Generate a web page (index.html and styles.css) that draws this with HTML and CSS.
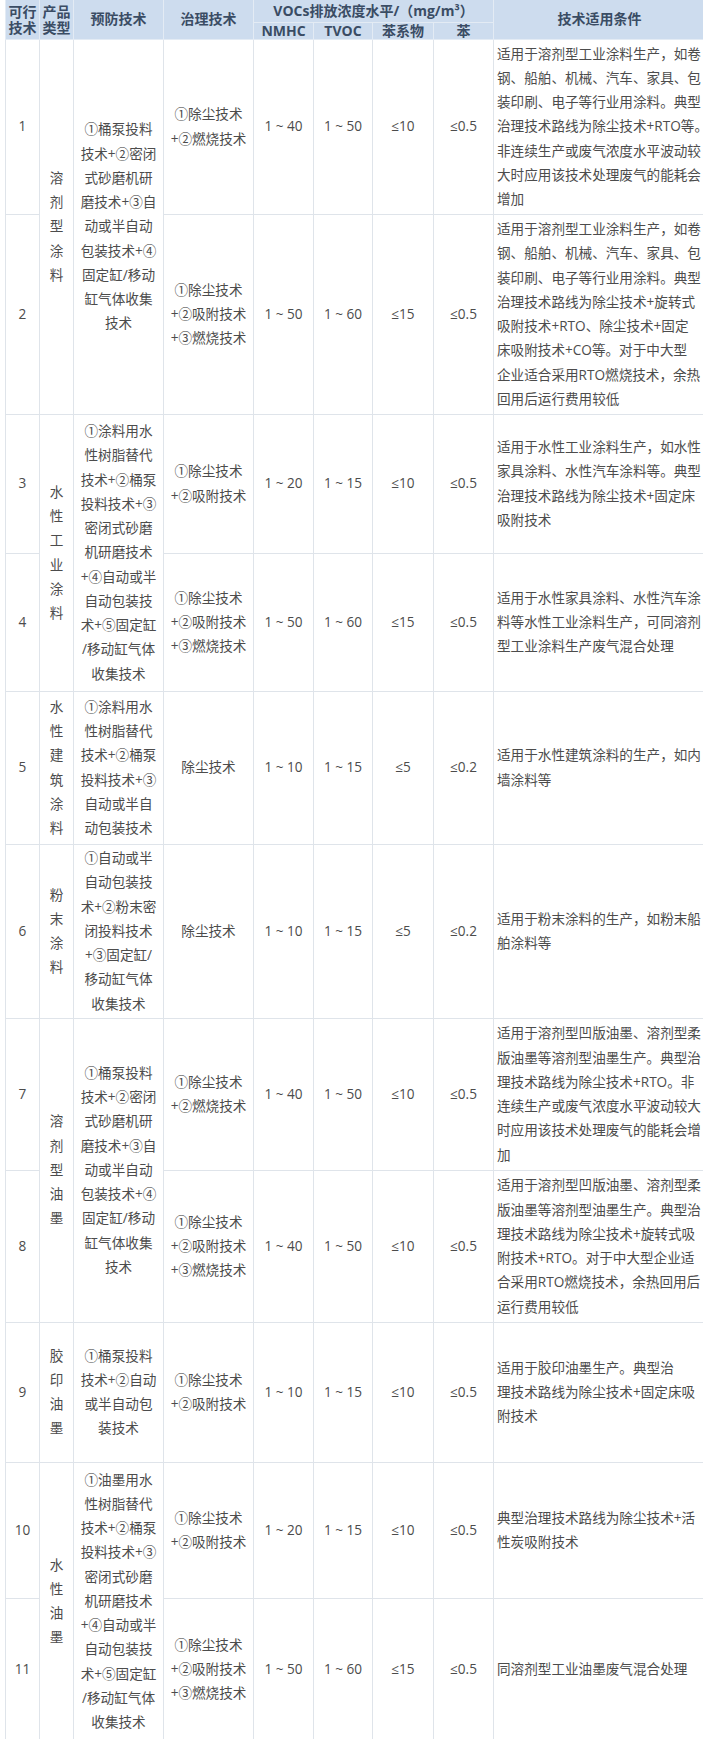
FILE: index.html
```html
<!DOCTYPE html>
<html lang="zh-CN">
<head>
<meta charset="utf-8">
<title>VOCs 可行技术</title>
<link rel="stylesheet" href="styles.css">
</head>
<body>
<table class="tech">
  <colgroup>
    <col class="c-no"><col class="c-type"><col class="c-prev"><col class="c-ctrl">
    <col class="c-v1"><col class="c-v2"><col class="c-v3"><col class="c-v4"><col class="c-cond">
  </colgroup>
  <thead>
    <tr class="h1">
      <th rowspan="2" class="th-tight">可行<br>技术</th>
      <th rowspan="2" class="th-tight">产品<br>类型</th>
      <th rowspan="2">预防技术</th>
      <th rowspan="2">治理技术</th>
      <th colspan="4">VOCs排放浓度水平/（mg/m³）</th>
      <th rowspan="2">技术适用条件</th>
    </tr>
    <tr class="h2"><th>NMHC</th><th>TVOC</th><th>苯系物</th><th>苯</th></tr>
  </thead>
  <tbody>
    <tr class="r1">
      <td>1</td>
      <td rowspan="2"><span class="vt">溶剂型涂料</span></td>
      <td rowspan="2">①桶泵投料<br>技术+②密闭<br>式砂磨机研<br>磨技术+③自<br>动或半自动<br>包装技术+④<br>固定缸/移动<br>缸气体收集<br>技术</td>
      <td>①除尘技术<br>+②燃烧技术</td>
      <td>1 ~ 40</td><td>1 ~ 50</td><td>≤10</td><td>≤0.5</td>
      <td class="cond">适用于溶剂型工业涂料生产，如卷<br>钢、船舶、机械、汽车、家具、包<br>装印刷、电子等行业用涂料。典型<br>治理技术路线为除尘技术+RTO等。<br>非连续生产或废气浓度水平波动较<br>大时应用该技术处理废气的能耗会<br>增加</td>
    </tr>
    <tr class="r2">
      <td>2</td>
      <td>①除尘技术<br>+②吸附技术<br>+③燃烧技术</td>
      <td>1 ~ 50</td><td>1 ~ 60</td><td>≤15</td><td>≤0.5</td>
      <td class="cond">适用于溶剂型工业涂料生产，如卷<br>钢、船舶、机械、汽车、家具、包<br>装印刷、电子等行业用涂料。典型<br>治理技术路线为除尘技术+旋转式<br>吸附技术+RTO、除尘技术+固定<br>床吸附技术+CO等。对于中大型<br>企业适合采用RTO燃烧技术，余热<br>回用后运行费用较低</td>
    </tr>
    <tr class="r3">
      <td>3</td>
      <td rowspan="2"><span class="vt">水性工业涂料</span></td>
      <td rowspan="2">①涂料用水<br>性树脂替代<br>技术+②桶泵<br>投料技术+③<br>密闭式砂磨<br>机研磨技术<br>+④自动或半<br>自动包装技<br>术+⑤固定缸<br>/移动缸气体<br>收集技术</td>
      <td>①除尘技术<br>+②吸附技术</td>
      <td>1 ~ 20</td><td>1 ~ 15</td><td>≤10</td><td>≤0.5</td>
      <td class="cond">适用于水性工业涂料生产，如水性<br>家具涂料、水性汽车涂料等。典型<br>治理技术路线为除尘技术+固定床<br>吸附技术</td>
    </tr>
    <tr class="r4">
      <td>4</td>
      <td>①除尘技术<br>+②吸附技术<br>+③燃烧技术</td>
      <td>1 ~ 50</td><td>1 ~ 60</td><td>≤15</td><td>≤0.5</td>
      <td class="cond">适用于水性家具涂料、水性汽车涂<br>料等水性工业涂料生产，可同溶剂<br>型工业涂料生产废气混合处理</td>
    </tr>
    <tr class="r5">
      <td>5</td>
      <td><span class="vt">水性建筑涂料</span></td>
      <td>①涂料用水<br>性树脂替代<br>技术+②桶泵<br>投料技术+③<br>自动或半自<br>动包装技术</td>
      <td>除尘技术</td>
      <td>1 ~ 10</td><td>1 ~ 15</td><td>≤5</td><td>≤0.2</td>
      <td class="cond">适用于水性建筑涂料的生产，如内<br>墙涂料等</td>
    </tr>
    <tr class="r6">
      <td>6</td>
      <td><span class="vt">粉末涂料</span></td>
      <td>①自动或半<br>自动包装技<br>术+②粉末密<br>闭投料技术<br>+③固定缸/<br>移动缸气体<br>收集技术</td>
      <td>除尘技术</td>
      <td>1 ~ 10</td><td>1 ~ 15</td><td>≤5</td><td>≤0.2</td>
      <td class="cond">适用于粉末涂料的生产，如粉末船<br>舶涂料等</td>
    </tr>
    <tr class="r7">
      <td>7</td>
      <td rowspan="2"><span class="vt">溶剂型油墨</span></td>
      <td rowspan="2">①桶泵投料<br>技术+②密闭<br>式砂磨机研<br>磨技术+③自<br>动或半自动<br>包装技术+④<br>固定缸/移动<br>缸气体收集<br>技术</td>
      <td>①除尘技术<br>+②燃烧技术</td>
      <td>1 ~ 40</td><td>1 ~ 50</td><td>≤10</td><td>≤0.5</td>
      <td class="cond">适用于溶剂型凹版油墨、溶剂型柔<br>版油墨等溶剂型油墨生产。典型治<br>理技术路线为除尘技术+RTO。非<br>连续生产或废气浓度水平波动较大<br>时应用该技术处理废气的能耗会增<br>加</td>
    </tr>
    <tr class="r8">
      <td>8</td>
      <td>①除尘技术<br>+②吸附技术<br>+③燃烧技术</td>
      <td>1 ~ 40</td><td>1 ~ 50</td><td>≤10</td><td>≤0.5</td>
      <td class="cond">适用于溶剂型凹版油墨、溶剂型柔<br>版油墨等溶剂型油墨生产。典型治<br>理技术路线为除尘技术+旋转式吸<br>附技术+RTO。对于中大型企业适<br>合采用RTO燃烧技术，余热回用后<br>运行费用较低</td>
    </tr>
    <tr class="r9">
      <td>9</td>
      <td><span class="vt">胶印油墨</span></td>
      <td>①桶泵投料<br>技术+②自动<br>或半自动包<br>装技术</td>
      <td>①除尘技术<br>+②吸附技术</td>
      <td>1 ~ 10</td><td>1 ~ 15</td><td>≤10</td><td>≤0.5</td>
      <td class="cond">适用于胶印油墨生产。典型治<br>理技术路线为除尘技术+固定床吸<br>附技术</td>
    </tr>
    <tr class="r10">
      <td>10</td>
      <td rowspan="2"><span class="vt">水性油墨</span></td>
      <td rowspan="2">①油墨用水<br>性树脂替代<br>技术+②桶泵<br>投料技术+③<br>密闭式砂磨<br>机研磨技术<br>+④自动或半<br>自动包装技<br>术+⑤固定缸<br>/移动缸气体<br>收集技术</td>
      <td>①除尘技术<br>+②吸附技术</td>
      <td>1 ~ 20</td><td>1 ~ 15</td><td>≤10</td><td>≤0.5</td>
      <td class="cond">典型治理技术路线为除尘技术+活<br>性炭吸附技术</td>
    </tr>
    <tr class="r11">
      <td>11</td>
      <td>①除尘技术<br>+②吸附技术<br>+③燃烧技术</td>
      <td>1 ~ 50</td><td>1 ~ 60</td><td>≤15</td><td>≤0.5</td>
      <td class="cond">同溶剂型工业油墨废气混合处理</td>
    </tr>
  </tbody>
</table>
</body>
</html>
```

FILE: styles.css
```css
html, body {
  margin: 0;
  padding: 0;
  background: #ffffff;
  overflow: hidden;
}

body {
  font-family: "Open Sans", "Noto Sans CJK SC", sans-serif;
  color: #4c4c4c;
}

.tech {
  margin-left: 5px;
  width: 700px;
  table-layout: fixed;
  border-collapse: collapse;
  font-size: 13.6px;
  line-height: 24.25px;
}

.c-no { width: 34px; }
.c-type { width: 34px; }
.c-prev { width: 90px; }
.c-ctrl { width: 90px; }
.c-v1 { width: 60px; }
.c-v2 { width: 59px; }
.c-v3 { width: 61px; }
.c-v4 { width: 60px; }
.c-cond { width: 212px; }

.tech th {
  background: #cddcee;
  color: #3a4c64;
  font-weight: 700;
  font-size: 14px;
  line-height: 16px;
  padding: 0 2px;
  border: 1px solid #e3ebf4;
  white-space: nowrap;
  text-align: center;
  vertical-align: middle;
}

.tech thead tr:first-child th {
  border-top: 0;
}

.tech th.th-tight {
  padding: 2px 1px 0;
}

.h1 { height: 22px; }
.h2 { height: 16px; }

.tech td {
  border: 1px solid #dfe4ea;
  padding: 0 4px;
  text-align: center;
  vertical-align: middle;
  white-space: nowrap;
}

.tech td.cond {
  text-align: left;
  padding: 0 2px 0 3px;
}

.vt {
  display: inline-block;
  width: 1em;
  white-space: normal;
  word-break: break-all;
}

.r1 { height: 175px; }
.r2 { height: 200px; }
.r3 { height: 139px; }
.r4 { height: 138px; }
.r5 { height: 153px; }
.r6 { height: 174px; }
.r7 { height: 152px; }
.r8 { height: 152px; }
.r9 { height: 140px; }
.r10 { height: 136px; }
.r11 { height: 142px; }
```
